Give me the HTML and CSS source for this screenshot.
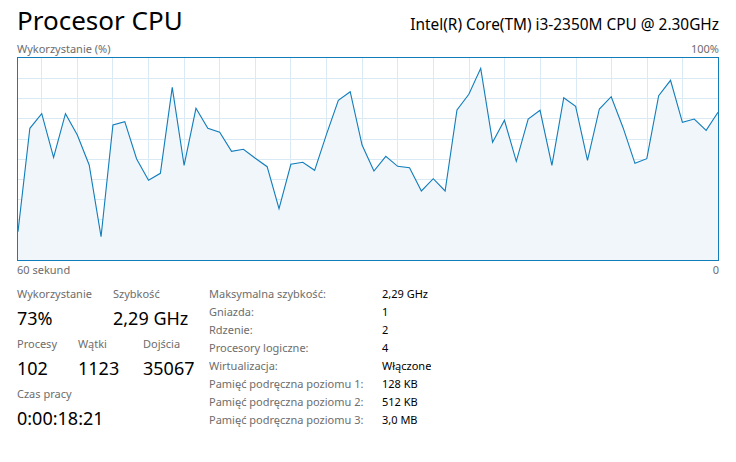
FILE: index.html
```html
<!DOCTYPE html>
<html lang="pl">
<head>
<meta charset="utf-8">
<title>Procesor CPU</title>
<link rel="stylesheet" href="styles.css">
</head>
<body>
<div class="page">
  <header class="head">
    <h1 class="title">Procesor CPU</h1>
    <div class="cpu-name">Intel(R) Core(TM) i3-2350M CPU @ 2.30GHz</div>
  </header>
  <div class="axis-top">
    <span>Wykorzystanie (%)</span>
    <span>100%</span>
  </div>
  <div class="graph">
    <svg class="chart" viewBox="0 0 700 202" preserveAspectRatio="none" width="700" height="202">
      <g class="grid">
        <path d="M23.5 0V202M59.1 0V202M94.8 0V202M130.4 0V202M166 0V202M201.7 0V202M237.3 0V202M272.9 0V202M308.5 0V202M344.2 0V202M379.8 0V202M415.4 0V202M451.1 0V202M486.7 0V202M522.3 0V202M558 0V202M593.6 0V202M629.2 0V202M664.8 0V202"/>
        <path d="M0 20.5H700M0 40.5H700M0 60.5H700M0 81.5H700M0 101.5H700M0 121.5H700M0 141.5H700M0 161.5H700M0 182.5H700"/>
      </g>
      <polygon class="area" points="0,173.7 11.86,70.3 23.73,55.7 35.59,99.3 47.46,55.7 59.32,77 71.19,107 83.05,178.7 94.92,67 106.78,63.7 118.64,101 130.51,122.3 142.37,115.3 154.24,29.3 166.1,107.3 177.97,50.3 189.83,70.3 201.69,74.3 213.56,93.3 225.42,91.3 237.29,100.3 249.15,108.7 261.02,150.7 272.88,106.3 284.75,104.3 296.61,112.3 308.47,76.3 320.34,42.3 332.2,33.7 344.07,87 355.93,113 367.8,98.3 379.66,108.3 391.53,109.7 403.39,133 415.25,120.7 427.12,133 438.98,52 450.85,36.3 462.71,10.3 474.58,84.3 486.44,62.3 498.31,103.3 510.17,61 522.03,52.3 533.9,107.3 545.76,39.7 557.63,48.3 569.49,102.3 581.36,51 593.22,38.7 605.08,69.7 616.95,105.3 628.81,100.7 640.68,37.7 652.54,22.3 664.41,64.3 676.27,61 688.14,72.3 700,54.3 700,202 0,202"/>
      <polyline class="line" points="0,173.7 11.86,70.3 23.73,55.7 35.59,99.3 47.46,55.7 59.32,77 71.19,107 83.05,178.7 94.92,67 106.78,63.7 118.64,101 130.51,122.3 142.37,115.3 154.24,29.3 166.1,107.3 177.97,50.3 189.83,70.3 201.69,74.3 213.56,93.3 225.42,91.3 237.29,100.3 249.15,108.7 261.02,150.7 272.88,106.3 284.75,104.3 296.61,112.3 308.47,76.3 320.34,42.3 332.2,33.7 344.07,87 355.93,113 367.8,98.3 379.66,108.3 391.53,109.7 403.39,133 415.25,120.7 427.12,133 438.98,52 450.85,36.3 462.71,10.3 474.58,84.3 486.44,62.3 498.31,103.3 510.17,61 522.03,52.3 533.9,107.3 545.76,39.7 557.63,48.3 569.49,102.3 581.36,51 593.22,38.7 605.08,69.7 616.95,105.3 628.81,100.7 640.68,37.7 652.54,22.3 664.41,64.3 676.27,61 688.14,72.3 700,54.3"/>
    </svg>
  </div>
  <div class="axis-bottom">
    <span>60 sekund</span>
    <span>0</span>
  </div>

  <section class="details">
    <div class="stats">
      <div class="stat-row">
        <div class="stat w96">
          <div class="label">Wykorzystanie</div>
          <div class="value">73%</div>
        </div>
        <div class="stat">
          <div class="label">Szybkość</div>
          <div class="value">2,29 GHz</div>
        </div>
      </div>
      <div class="stat-row">
        <div class="stat w61">
          <div class="label">Procesy</div>
          <div class="value">102</div>
        </div>
        <div class="stat w65">
          <div class="label">Wątki</div>
          <div class="value">1123</div>
        </div>
        <div class="stat">
          <div class="label">Dojścia</div>
          <div class="value">35067</div>
        </div>
      </div>
      <div class="stat-row">
        <div class="stat">
          <div class="label">Czas pracy</div>
          <div class="value">0:00:18:21</div>
        </div>
      </div>
    </div>

    <dl class="specs">
      <dt>Maksymalna szybkość:</dt><dd>2,29 GHz</dd>
      <dt>Gniazda:</dt><dd>1</dd>
      <dt>Rdzenie:</dt><dd>2</dd>
      <dt>Procesory logiczne:</dt><dd>4</dd>
      <dt>Wirtualizacja:</dt><dd>Włączone</dd>
      <dt>Pamięć podręczna poziomu 1:</dt><dd>128 KB</dd>
      <dt>Pamięć podręczna poziomu 2:</dt><dd>512 KB</dd>
      <dt>Pamięć podręczna poziomu 3:</dt><dd>3,0 MB</dd>
    </dl>
  </section>
</div>
</body>
</html>
```

FILE: styles.css
```css
* { box-sizing: border-box; }

html, body {
  margin: 0;
  padding: 0;
  background: #ffffff;
}

body {
  font-family: "Noto Sans", "Open Sans", sans-serif;
  color: #000000;
}

.page {
  width: 736px;
  height: 462px;
  padding: 0 17px 0 17px;
  overflow: hidden;
}

.head {
  display: flex;
  justify-content: space-between;
  align-items: baseline;
  height: 40px;
}

.title {
  margin: 0;
  font-size: 26px;
  font-weight: 400;
  line-height: 40px;
}

.cpu-name {
  font-size: 15.4px;
  line-height: 20px;
}

.axis-top,
.axis-bottom {
  display: flex;
  justify-content: space-between;
  font-size: 11px;
  color: #6d6d6d;
}

.axis-top {
  line-height: 17px;
  height: 17px;
}

.axis-bottom {
  line-height: 16px;
  height: 22px;
  padding-top: 1px;
}

.graph {
  width: 702px;
  height: 204px;
  border: 1px solid #117dbb;
  background: #ffffff;
}

.chart {
  display: block;
  width: 700px;
  height: 202px;
}

.grid path {
  stroke: #d9eaf4;
  stroke-width: 1;
  fill: none;
  shape-rendering: crispEdges;
}

.area {
  fill: #f1f6fa;
  stroke: none;
}

.line {
  fill: none;
  stroke: #117dbb;
  stroke-width: 1.1;
  stroke-linejoin: miter;
}

.details {
  display: flex;
  padding-top: 2px;
}

.stats {
  width: 192px;
  display: flex;
  flex-direction: column;
  gap: 5px;
  padding-top: 1px;
}

.stat-row {
  display: flex;
}

.w96 { width: 96px; }
.w61 { width: 61px; }
.w65 { width: 65px; }

.label {
  font-size: 11px;
  line-height: 16px;
  color: #6d6d6d;
}

.value {
  font-size: 18px;
  line-height: 26px;
  margin-top: 3px;
  color: #000000;
}

.specs {
  margin: 0;
  display: grid;
  grid-template-columns: 173px auto;
  grid-auto-rows: 18px;
  font-size: 11px;
  line-height: 18px;
}

.specs dt,
.specs dd {
  height: 18px;
  overflow: hidden;
}

.specs dt {
  color: #6d6d6d;
}

.specs dd {
  margin: 0;
  color: #000000;
}
```
